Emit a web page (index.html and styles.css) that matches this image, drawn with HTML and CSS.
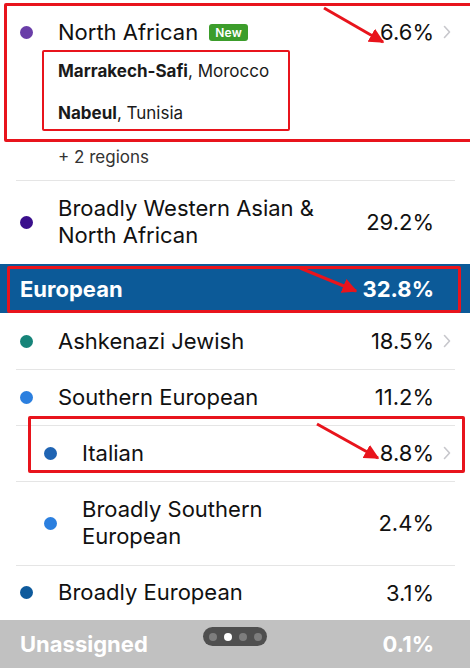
FILE: index.html
```html
<!DOCTYPE html>
<html>
<head>
<meta charset="utf-8">
<link rel="stylesheet" href="styles.css">
</head>
<body>
<div class="page">
  <div class="group first">
    <div class="row top">
      <span class="dot" style="background:#6a3ea8"></span>
      <span class="name">North African <span class="badge">New</span></span>
      <span class="pct">6.6%</span>
      <span class="chev"><svg width="8" height="14" viewBox="0 0 8 14"><path d="M1.5 1.5 L6.5 7 L1.5 12.5" fill="none" stroke="#c7c7cc" stroke-width="1.6" stroke-linecap="round" stroke-linejoin="round"/></svg></span>
    </div>
    <div class="subs">
      <div class="sub"><b>Marrakech-Safi</b>, Morocco</div>
      <div class="sub"><b>Nabeul</b>, Tunisia</div>
      <div class="more">+ 2 regions</div>
    </div>
  </div>
  <div class="row two divider">
    <span class="dot" style="background:#3a0f8c"></span>
    <span class="name">Broadly Western Asian &amp;<br>North African</span>
    <span class="pct">29.2%</span>
    <span class="chev"></span>
  </div>
  <div class="bar blue">
    <span class="bname">European</span>
    <span class="pct">32.8%</span>
    <span class="chev"></span>
  </div>
  <div class="row one">
    <span class="dot" style="background:#168479"></span>
    <span class="name">Ashkenazi Jewish</span>
    <span class="pct">18.5%</span>
    <span class="chev"><svg width="8" height="14" viewBox="0 0 8 14"><path d="M1.5 1.5 L6.5 7 L1.5 12.5" fill="none" stroke="#c7c7cc" stroke-width="1.6" stroke-linecap="round" stroke-linejoin="round"/></svg></span>
  </div>
  <div class="row one divider">
    <span class="dot" style="background:#2b7fdf"></span>
    <span class="name">Southern European</span>
    <span class="pct">11.2%</span>
    <span class="chev"></span>
  </div>
  <div class="row one divider sub2">
    <span class="dot" style="background:#1f64b3"></span>
    <span class="name">Italian</span>
    <span class="pct">8.8%</span>
    <span class="chev"><svg width="8" height="14" viewBox="0 0 8 14"><path d="M1.5 1.5 L6.5 7 L1.5 12.5" fill="none" stroke="#c7c7cc" stroke-width="1.6" stroke-linecap="round" stroke-linejoin="round"/></svg></span>
  </div>
  <div class="row two divider sub2">
    <span class="dot" style="background:#2b7fdf"></span>
    <span class="name">Broadly Southern<br>European</span>
    <span class="pct">2.4%</span>
    <span class="chev"></span>
  </div>
  <div class="row one divider last">
    <span class="dot" style="background:#0e5a9c"></span>
    <span class="name">Broadly European</span>
    <span class="pct">3.1%</span>
    <span class="chev"></span>
  </div>
  <div class="bar gray">
    <span class="bname">Unassigned</span>
    <span class="pct">0.1%</span>
    <span class="chev"></span>
    <div class="pager"><i></i><i class="on"></i><i></i><i></i></div>
  </div>

  <div class="box box1"></div>
  <div class="box box2"></div>
  <div class="box box3"></div>
  <div class="box box4"></div>
  <svg class="arrows" width="470" height="668" viewBox="0 0 470 668">
    <defs>
      <marker id="ah" viewBox="0 0 10 10" refX="9" refY="5" markerWidth="5" markerHeight="5" orient="auto">
        <path d="M0 0 L10 5 L0 10 Z" fill="#e8141c"/>
      </marker>
    </defs>
    <line x1="324" y1="8" x2="383" y2="42" stroke="#e8141c" stroke-width="3" marker-end="url(#ah)"/>
    <line x1="300" y1="268" x2="356" y2="291" stroke="#e8141c" stroke-width="3" marker-end="url(#ah)"/>
    <line x1="317" y1="424" x2="378" y2="458" stroke="#e8141c" stroke-width="3" marker-end="url(#ah)"/>
  </svg>
</div>
</body>
</html>
```

FILE: styles.css
```css
html, body {
  margin: 0;
  padding: 0;
  background: #fff;
}
body {
  font-family: Inter, "Noto Sans", "Liberation Sans", sans-serif;
  color: #111;
}
.page {
  position: relative;
  width: 470px;
  height: 668px;
  overflow: hidden;
}
.row {
  display: flex;
  align-items: center;
  padding-left: 20px;
  font-size: 22px;
}
.row.sub2 {
  padding-left: 44px;
}
.divider {
  position: relative;
}
.divider::before {
  content: "";
  position: absolute;
  left: 16px;
  right: 15px;
  top: 0;
  height: 1px;
  background: #e5e5e5;
}
.dot {
  flex: none;
  width: 13px;
  height: 13px;
  border-radius: 50%;
  margin-right: 25px;
}
.name {
  flex: 1;
  line-height: 27px;
  display: flex;
  align-items: center;
}
.row.two .name {
  display: block;
}
.pct {
  flex: none;
  text-align: right;
  font-size: 22px;
}
.chev {
  flex: none;
  width: 36px;
  display: flex;
  align-items: center;
  padding-left: 9px;
  box-sizing: border-box;
}
.chev svg { display: block; }
.badge {
  display: inline-block;
  background: #3c9d2b;
  color: #fff;
  font-size: 12px;
  font-weight: 600;
  line-height: 17px;
  padding: 0 6px;
  border-radius: 3px;
  margin-left: 11px;
  letter-spacing: 0.2px;
}
.group.first .row.top {
  height: 64px;
}
.subs {
  padding-left: 58px;
  font-size: 17px;
  color: #1a1a1a;
}
.sub {
  height: 42px;
  line-height: 42px;
}
.sub b { font-weight: 700; }
.sub:first-child { margin-top: -14px; }
.more {
  height: 48px;
  line-height: 50px;
  color: #333;
  margin-top: -2px;
}
.row.two { height: 84px; }
.row.one { height: 56px; }
.row.last { height: 55px; }
.bar {
  position: relative;
  display: flex;
  align-items: center;
  padding-left: 20px;
  font-weight: 700;
  color: #fff;
  font-size: 22px;
}
.bar .bname { flex: 1; }
.bar .pct { font-weight: 700; }
.bar.blue {
  background: #0c5a98;
  height: 49px;
}
.bar.gray {
  background: #c1c1c1;
  height: 48px;
}
.pager {
  position: absolute;
  left: 203px;
  top: 7px;
  width: 64px;
  height: 19px;
  border-radius: 10px;
  background: #4f4f4f;
  display: flex;
  align-items: center;
  justify-content: center;
  gap: 7px;
}
.pager i {
  width: 8px;
  height: 8px;
  border-radius: 50%;
  background: #7d7d7d;
}
.pager i.on { background: #fff; }
.box {
  position: absolute;
  border: 3px solid #e8141c;
  box-sizing: border-box;
  border-radius: 2px;
}
.box1 { left: 4px; top: 3px; width: 480px; height: 139px; }
.box2 { left: 42px; top: 50px; width: 248px; height: 81px; border-width: 2.5px; }
.box3 { left: 7px; top: 266px; width: 454px; height: 47px; }
.box4 { left: 28px; top: 416px; width: 437px; height: 57px; }
.arrows {
  position: absolute;
  left: 0;
  top: 0;
  pointer-events: none;
}
```
